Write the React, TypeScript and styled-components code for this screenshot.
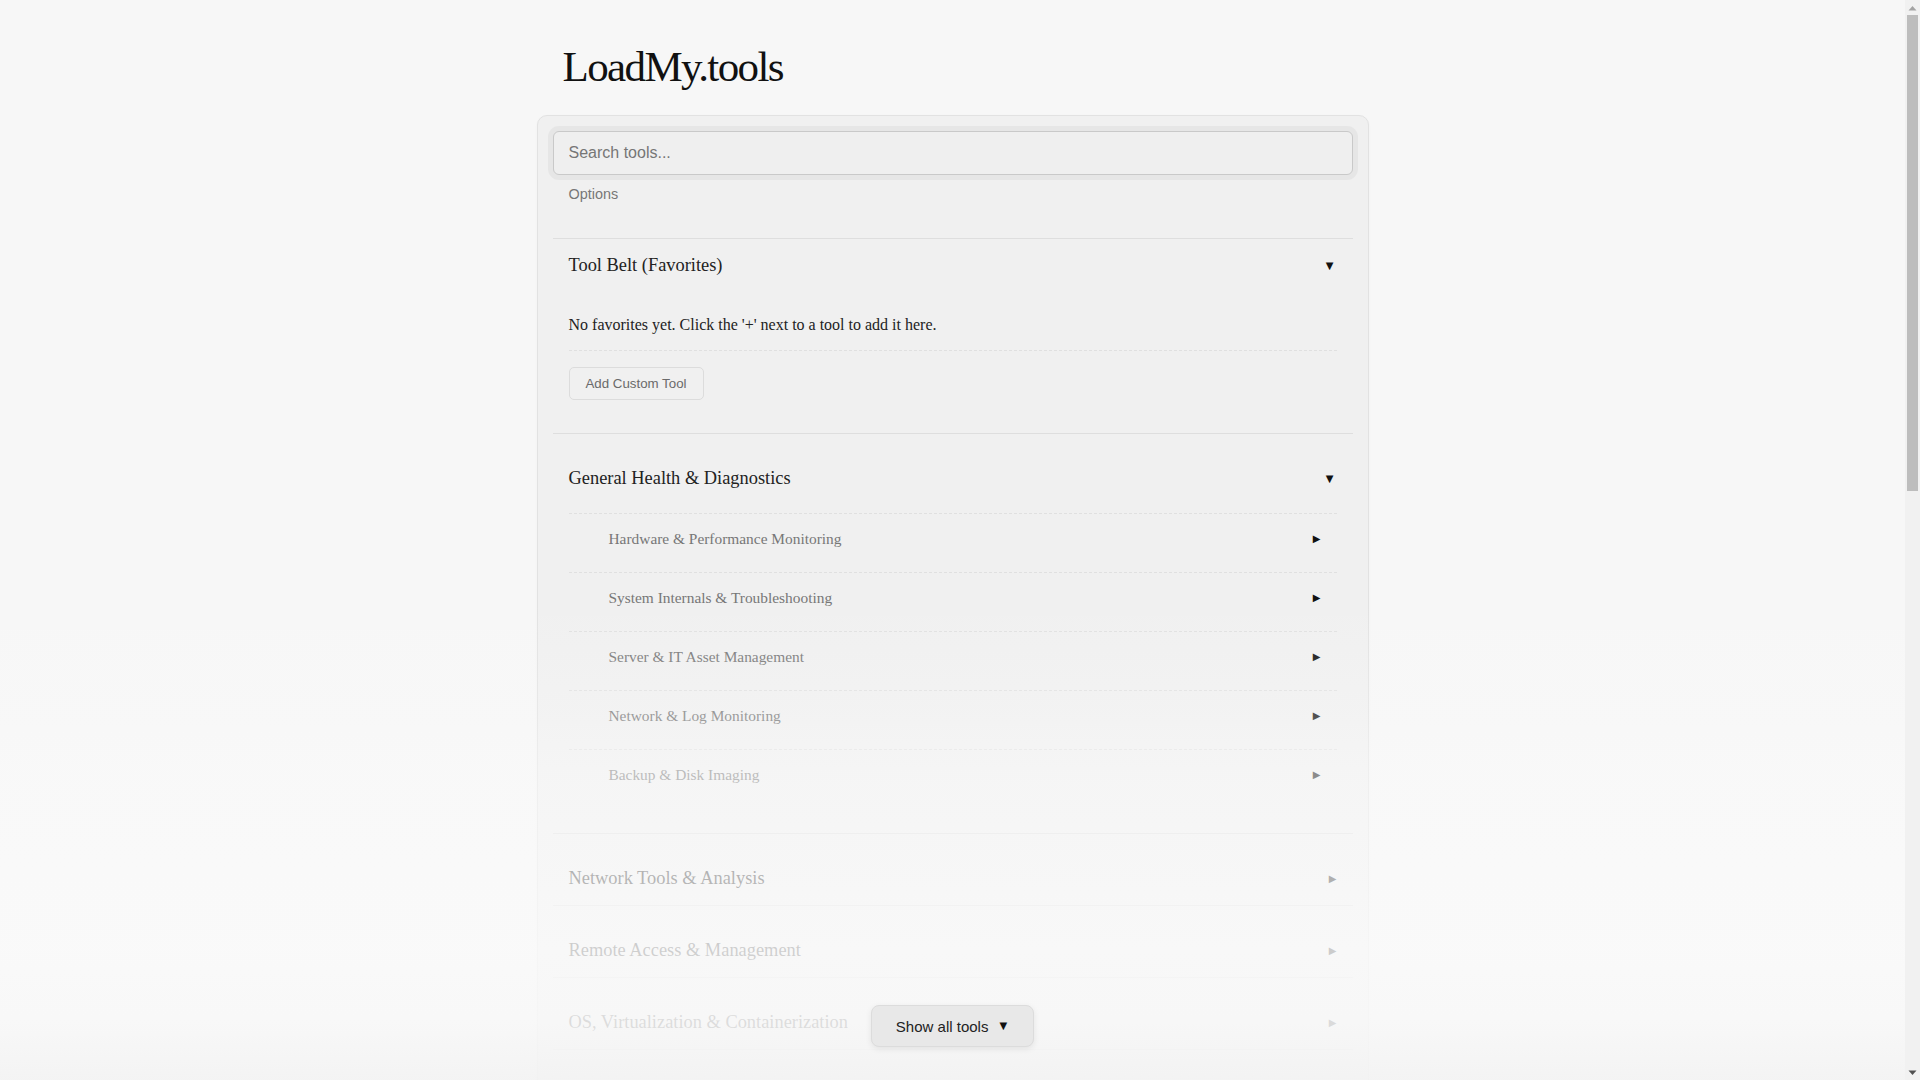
import React from 'react';
import styled, { createGlobalStyle } from 'styled-components';

const GlobalStyle = createGlobalStyle`
  html, body { margin: 0; padding: 0; height: 100%; overflow: hidden; }
  body {
    background: #f7f7f7;
    font-family: "Liberation Serif", "Times New Roman", serif;
    color: #222;
  }
  #root { height: 100%; }
  * { box-sizing: border-box; }
`;

const Shell = styled.div`
  display: grid;
  grid-template-columns: 1fr 15px;
  height: 100vh;
`;

const Viewport = styled.div`
  position: relative;
  min-width: 0;
  height: 100vh;
`;

const Scroller = styled.div`
  height: 100%;
  overflow-y: auto;
  scrollbar-width: none;
  &::-webkit-scrollbar {
    display: none;
  }
`;

const Rail = styled.div`
  display: flex;
  flex-direction: column;
  height: 100vh;
  background: #f1f1f1;
`;

const RailButton = styled.div`
  display: flex;
  align-items: center;
  justify-content: center;
  height: 15px;
  flex: none;
`;

const Thumb = styled.div`
  flex: none;
  height: 476px;
  margin: 0 2px;
  background: #bdbdbd;
`;

const RailSpace = styled.div`
  flex: 1;
`;

const Page = styled.main`
  width: 832px;
  margin: 0 auto;
  padding: 42px 0 24px;
`;

const Title = styled.h1`
  margin: 0 0 24px;
  padding-left: 26px;
  font-size: 43px;
  font-weight: normal;
  line-height: normal;
  letter-spacing: -1.6px;
  color: #111;
`;

const Card = styled.section`
  background: #f0f0f0;
  border: 1px solid #e2e2e2;
  border-radius: 10px;
  padding: 15px;
  box-shadow: 0 1px 3px rgba(0, 0, 0, 0.03);
`;

const SearchInput = styled.input`
  display: block;
  width: 100%;
  height: 44px;
  padding: 0 15px;
  border: 1px solid #c9c9c9;
  border-radius: 6px;
  background: #efefef;
  box-shadow: 0 0 0 5px #e6e6e6;
  font: 16px "Liberation Sans", Arial, sans-serif;
  color: #222;
  outline: none;
  &::placeholder {
    color: #767676;
  }
`;

const Options = styled.div`
  margin-top: 11px;
  padding: 0 16px 36px;
  font: 14.4px/16px "Liberation Sans", Arial, sans-serif;
  color: #777;
`;

const Section = styled.div<{ $spaced?: boolean }>`
  border-top: 1px solid #dedede;
  padding-top: ${(p) => (p.$spaced ? 18 : 0)}px;
`;

const SectionHeader = styled.div`
  display: flex;
  align-items: center;
  justify-content: space-between;
  padding: 16px;
  font-size: 18.4px;
  line-height: 21px;
  color: #222;
`;

const Caret = styled.span<{ $inset?: number }>`
  margin-right: ${(p) => p.$inset ?? 0}px;
  font-family: "DejaVu Sans", sans-serif;
  font-size: 10px;
  line-height: 1;
  color: #111;
`;

const Message = styled.p`
  margin: 0 16px;
  padding: 24px 0 16px;
  font-size: 16px;
  line-height: 18px;
  color: #222;
`;

const ButtonRow = styled.div`
  margin: 0 16px;
  padding: 16px 0 33px;
  border-top: 1px dashed #e0e0e0;
`;

const SmallButton = styled.button`
  height: 33px;
  padding: 0 16px;
  border: 1px solid #dcdcdc;
  border-radius: 5px;
  background: #f0f0f0;
  font: 13.3px "Liberation Sans", Arial, sans-serif;
  color: #6a6a6a;
  cursor: pointer;
`;

const SubList = styled.div`
  padding: 8px 16px 25px;
`;

const SubRow = styled.div`
  display: flex;
  align-items: center;
  justify-content: space-between;
  border-top: 1px dashed #e0e0e0;
  padding: 16px 16px 24px 40px;
  font-size: 15.4px;
  line-height: 18px;
  color: #777;
`;

const Fade = styled.div`
  position: absolute;
  left: 0;
  right: 0;
  bottom: 0;
  height: 480px;
  pointer-events: none;
  display: flex;
  justify-content: center;
  align-items: flex-end;
  padding-bottom: 33px;
  background: linear-gradient(
    to bottom,
    rgba(250, 250, 250, 0) 0%,
    rgba(250, 250, 250, 0.12) 12%,
    rgba(250, 250, 250, 0.27) 24%,
    rgba(250, 250, 250, 0.52) 36%,
    rgba(250, 250, 250, 0.68) 58%,
    rgba(250, 250, 250, 0.8) 73%,
    rgba(248, 248, 248, 0.87) 88%,
    rgba(243, 243, 243, 0.9) 100%
  );
`;

const ShowAllButton = styled.button`
  pointer-events: auto;
  display: flex;
  align-items: center;
  gap: 11px;
  height: 42px;
  padding: 0 26px 0 24px;
  border: 1px solid #dcdcdc;
  border-radius: 8px;
  background: #e8e8e8;
  box-shadow: 0 2px 6px rgba(0, 0, 0, 0.08);
  font: 15px "Liberation Sans", Arial, sans-serif;
  color: #222;
  cursor: pointer;
`;

const subTools = [
  'Hardware & Performance Monitoring',
  'System Internals & Troubleshooting',
  'Server & IT Asset Management',
  'Network & Log Monitoring',
  'Backup & Disk Imaging',
];

const collapsed = [
  'Network Tools & Analysis',
  'Remote Access & Management',
  'OS, Virtualization & Containerization',
  'Security & Malware Removal',
  'Password & Credential Management',
  'File Management & Transfer',
  'Data Recovery',
  'Scripting & Automation',
  'Development Tools',
  'Database Tools',
  'Cloud & Web Services',
  'Email & Communication',
  'Documentation & Note Taking',
  'Productivity & Utilities',
  'Media & Graphics',
  'Browser & Web Testing',
  'Active Directory & Identity',
  'Patching & Deployment',
  'Printing & Peripherals',
  'Mobile Device Management',
  'Miscellaneous Utilities',
];

const ArrowIcon = ({ dir, color }: { dir: 'up' | 'down'; color: string }) => (
  <svg width="9" height="6" viewBox="0 0 9 6" aria-hidden="true">
    <path d={dir === 'up' ? 'M0.5 5.5 L4.5 1 L8.5 5.5 Z' : 'M0.5 0.5 L4.5 5 L8.5 0.5 Z'} fill={color} />
  </svg>
);

export default function App() {
  return (
    <>
      <GlobalStyle />
      <Shell>
        <Viewport>
          <Scroller>
            <Page>
              <Title>LoadMy.tools</Title>
              <Card>
                <SearchInput placeholder="Search tools..." />
                <Options>Options</Options>

                <Section>
                  <SectionHeader>
                    <span>Tool Belt (Favorites)</span>
                    <Caret $inset={3}>▼</Caret>
                  </SectionHeader>
                  <Message>No favorites yet. Click the '+' next to a tool to add it here.</Message>
                  <ButtonRow>
                    <SmallButton>Add Custom Tool</SmallButton>
                  </ButtonRow>
                </Section>

                <Section $spaced>
                  <SectionHeader>
                    <span>General Health &amp; Diagnostics</span>
                    <Caret $inset={3}>▼</Caret>
                  </SectionHeader>
                  <SubList>
                    {subTools.map((t) => (
                      <SubRow key={t}>
                        <span>{t}</span>
                        <Caret>▶</Caret>
                      </SubRow>
                    ))}
                  </SubList>
                </Section>

                {collapsed.map((c) => (
                  <Section $spaced key={c}>
                    <SectionHeader>
                      <span>{c}</span>
                      <Caret>▶</Caret>
                    </SectionHeader>
                  </Section>
                ))}
              </Card>
            </Page>
          </Scroller>
          <Fade>
            <ShowAllButton>
              <span>Show all tools</span>
              <Caret>▼</Caret>
            </ShowAllButton>
          </Fade>
        </Viewport>
        <Rail aria-hidden="true">
          <RailButton>
            <ArrowIcon dir="up" color="#a3a3a3" />
          </RailButton>
          <Thumb />
          <RailSpace />
          <RailButton>
            <ArrowIcon dir="down" color="#505050" />
          </RailButton>
        </Rail>
      </Shell>
    </>
  );
}
